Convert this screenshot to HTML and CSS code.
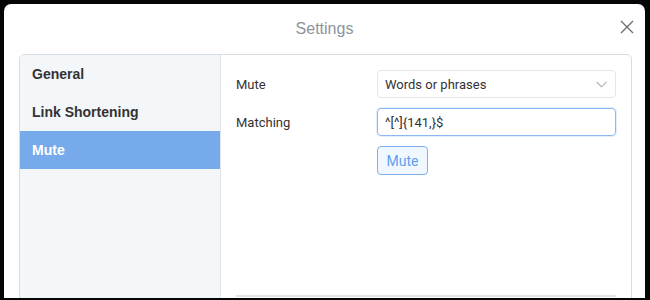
FILE: index.html
```html
<!DOCTYPE html>
<html>
<head>
<meta charset="utf-8">
<link rel="stylesheet" href="styles.css">
</head>
<body>
<div class="modal">
  <div class="modal-header">
    <div class="title">Settings</div>
    <button class="close" aria-label="Close">
      <svg width="14" height="14" viewBox="0 0 14 14"><path d="M1 1L13 13M13 1L1 13" stroke="#6f6f6f" stroke-width="1.4" fill="none"/></svg>
    </button>
  </div>
  <div class="panel">
    <nav class="sidebar">
      <div class="nav-item">General</div>
      <div class="nav-item">Link Shortening</div>
      <div class="nav-item active">Mute</div>
    </nav>
    <div class="content">
      <div class="form">
        <div class="label">Mute</div>
        <div class="select">
          <span>Words or phrases</span>
          <svg class="chev" width="11" height="7" viewBox="0 0 11 7"><path d="M0.5 0.8L5.5 5.8L10.5 0.8" stroke="#a9adb3" stroke-width="1.1" fill="none"/></svg>
        </div>
        <div class="label">Matching</div>
        <div class="input">^[^]{141,}$</div>
        <div class="spacer"></div>
        <div class="btn-wrap"><button class="btn">Mute</button></div>
      </div>
      <div class="rule"></div>
    </div>
  </div>
</div>
</body>
</html>
```
FILE: styles.css
```css
html, body {
  margin: 0;
  padding: 0;
  background: #050505;
  height: 300px;
  overflow: hidden;
}
.modal {
  margin: 4px 5px 0 4px;
  height: 294px;
  overflow: hidden;
  background: #fff;
  border-radius: 7px 7px 0 0;
  display: flex;
  flex-direction: column;
}
.modal-header {
  height: 50px;
  flex-shrink: 0;
  display: flex;
  align-items: center;
  justify-content: center;
  position: relative;
}
.title {
  font-family: "Liberation Sans", Arial, sans-serif;
  font-size: 16px;
  color: #8d949b;
}
.close {
  position: absolute;
  right: 11px;
  top: 16px;
  width: 14px;
  height: 14px;
  padding: 0;
  border: 0;
  background: none;
  display: flex;
}
.panel {
  margin: 0 13px 0 15px;
  height: 300px;
  flex-shrink: 0;
  border: 1px solid #d8dde3;
  border-radius: 5px;
  display: flex;
  overflow: hidden;
}
.sidebar {
  width: 200px;
  background: #f4f7fa;
  border-right: 1px solid #e1e6eb;
  flex-shrink: 0;
}
.nav-item {
  height: 38px;
  line-height: 38px;
  padding-left: 12px;
  font-family: "Liberation Sans", Arial, sans-serif;
  font-weight: bold;
  font-size: 14px;
  color: #333;
}
.nav-item.active {
  background: #76aaeb;
  color: #fff;
}
.content {
  flex: 1;
  padding: 15px 15px 0 15px;
  font-family: Roboto, "Liberation Sans", sans-serif;
  font-size: 13px;
  color: #333;
}
.form {
  display: grid;
  grid-template-columns: 141px 1fr;
  row-gap: 10px;
  align-items: center;
}
.select, .input {
  height: 28px;
  box-sizing: border-box;
  border-radius: 4px;
  display: flex;
  align-items: center;
  padding-left: 7px;
}
.select {
  border: 1px solid #e3e6ea;
  justify-content: space-between;
  padding-right: 8px;
}
.input {
  border: 1px solid #8db7f0;
  box-shadow: 0 0 0 1px #e4eefc;
}
.btn-wrap {
  display: flex;
}
.btn {
  height: 29px;
  width: 51px;
  border: 1px solid #7eb0ee;
  background: #f1f7ff;
  border-radius: 4px;
  color: #5f9fec;
  font-family: Roboto, "Liberation Sans", sans-serif;
  font-size: 14px;
  padding: 0;
}
.rule {
  margin-top: 120px;
  border-top: 2px solid #e2e4e7;
}
```
